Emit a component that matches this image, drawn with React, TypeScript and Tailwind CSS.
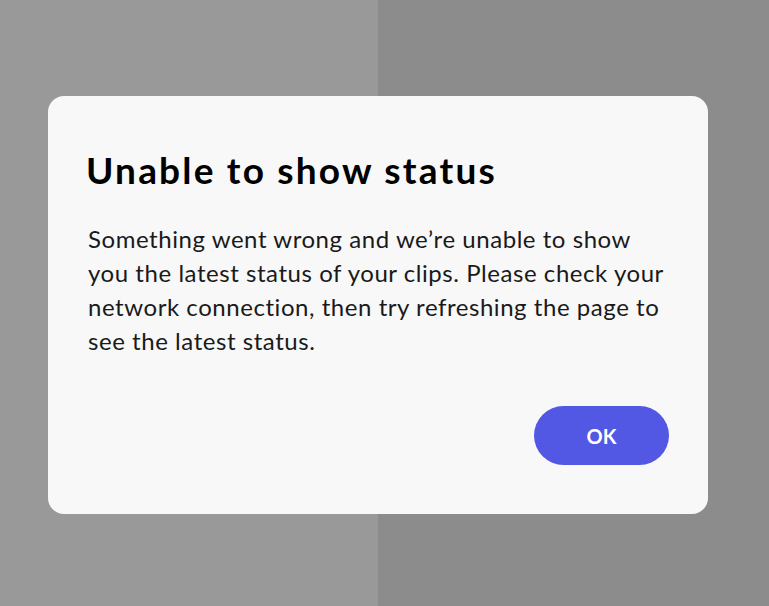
import React from "react";

export default function App() {
  return (
    <div className="relative h-[606px] w-[769px] overflow-hidden" style={{ fontFamily: "Lato, 'Open Sans', sans-serif" }}>
      <div className="flex h-full w-full">
        <div className="h-full w-[378px] bg-[#999999]" />
        <div className="h-full flex-1 bg-[#8c8c8c]" />
      </div>
      <div className="absolute left-[48px] top-[96px] flex h-[418px] w-[660px] flex-col rounded-[16px] bg-[#f8f8f8] pl-[38px] pr-[39px]">
        <h1 className="mt-[50px] text-[37px] font-bold leading-[48px] tracking-[2.2px] text-black">Unable to show status</h1>
        <p className="ml-[2px] mt-[28px] w-[583px] text-[24px] leading-[34px] tracking-[0.55px] text-[#1a1a1a]">
          Something went wrong and we’re unable to show you the latest status of your clips. Please check your network connection, then try refreshing the page to see the latest status.
        </p>
        <div className="mt-auto mb-[49px] flex justify-end">
          <button className="flex h-[59px] w-[135px] items-center justify-center rounded-full bg-[#5258e4] text-[20px] font-bold text-white">
            OK
          </button>
        </div>
      </div>
    </div>
  );
}
